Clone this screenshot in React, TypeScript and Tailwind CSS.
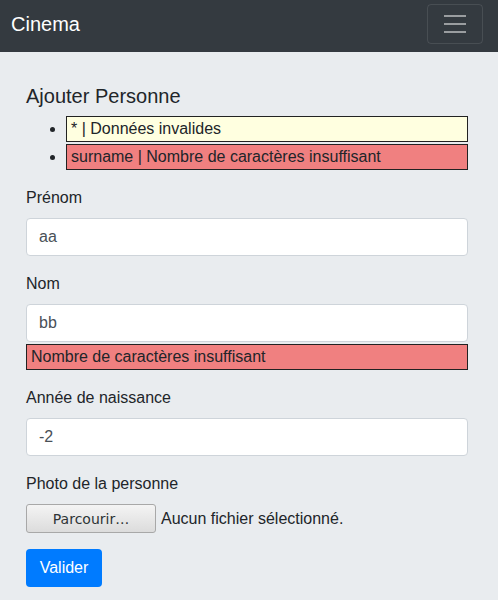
export default function App() {
  return (
    <div className="min-h-[600px] bg-[#e9ecef] font-['Liberation_Sans',Arial,sans-serif] text-[16px] leading-[24px] text-[#212529]">
      <nav className="flex h-[52px] items-start justify-between bg-[#343a40] pl-[11px] pr-[15px] pt-[4px]">
        <span className="mt-[5px] text-[20px] leading-[30px] text-white">Cinema</span>
        <button className="flex h-[40px] w-[56px] items-center justify-center rounded-[4px] border border-white/10">
          <svg width="30" height="30" viewBox="0 0 30 30">
            <path d="M4 7h22M4 15h22M4 23h22" stroke="rgba(255,255,255,0.5)" strokeWidth="2" />
          </svg>
        </button>
      </nav>

      <main className="pl-[26px] pr-[30px] pt-[32px]">
        <h4 className="mb-[8px] text-[20px] leading-[24px]">Ajouter Personne</h4>
        <ul className="mb-[16px] list-disc pl-[40px]">
          <li className="mb-[2px]">
            <div className="border border-[#222] bg-[#ffffe0] px-[4px]">* | Données invalides</div>
          </li>
          <li>
            <div className="border border-[#222] bg-[#f08080] px-[4px]">surname | Nombre de caractères insuffisant</div>
          </li>
        </ul>

        <div className="mb-[16px]">
          <label className="mb-[8px] block">Prénom</label>
          <input
            className="block h-[38px] w-full rounded-[4px] border border-[#ced4da] bg-white px-[12px] text-[#495057] outline-none"
            defaultValue="aa"
          />
        </div>

        <div className="mb-[16px]">
          <label className="mb-[8px] block">Nom</label>
          <input
            className="block h-[38px] w-full rounded-[4px] border border-[#ced4da] bg-white px-[12px] text-[#495057] outline-none"
            defaultValue="bb"
          />
          <div className="mt-[2px] border border-[#222] bg-[#f08080] px-[4px]">Nombre de caractères insuffisant</div>
        </div>

        <div className="mb-[16px]">
          <label className="mb-[8px] block">Année de naissance</label>
          <input
            className="block h-[38px] w-full rounded-[4px] border border-[#ced4da] bg-white px-[12px] text-[#495057] outline-none"
            defaultValue="-2"
          />
        </div>

        <div className="mb-[16px]">
          <label className="mb-[8px] block">Photo de la personne</label>
          <div className="flex items-center gap-[5px]">
            <button className="h-[29px] w-[130px] rounded-[3px] border border-[#a8a8a8] bg-gradient-to-b from-[#f4f4f4] to-[#dcdcdc] font-['DejaVu_Sans',sans-serif] text-[14px] text-[#2e3436]">
              Parcourir…
            </button>
            <span>Aucun fichier sélectionné.</span>
          </div>
        </div>

        <button className="h-[38px] w-[76px] rounded-[4px] bg-[#007bff] text-white">Valider</button>
      </main>
    </div>
  );
}
